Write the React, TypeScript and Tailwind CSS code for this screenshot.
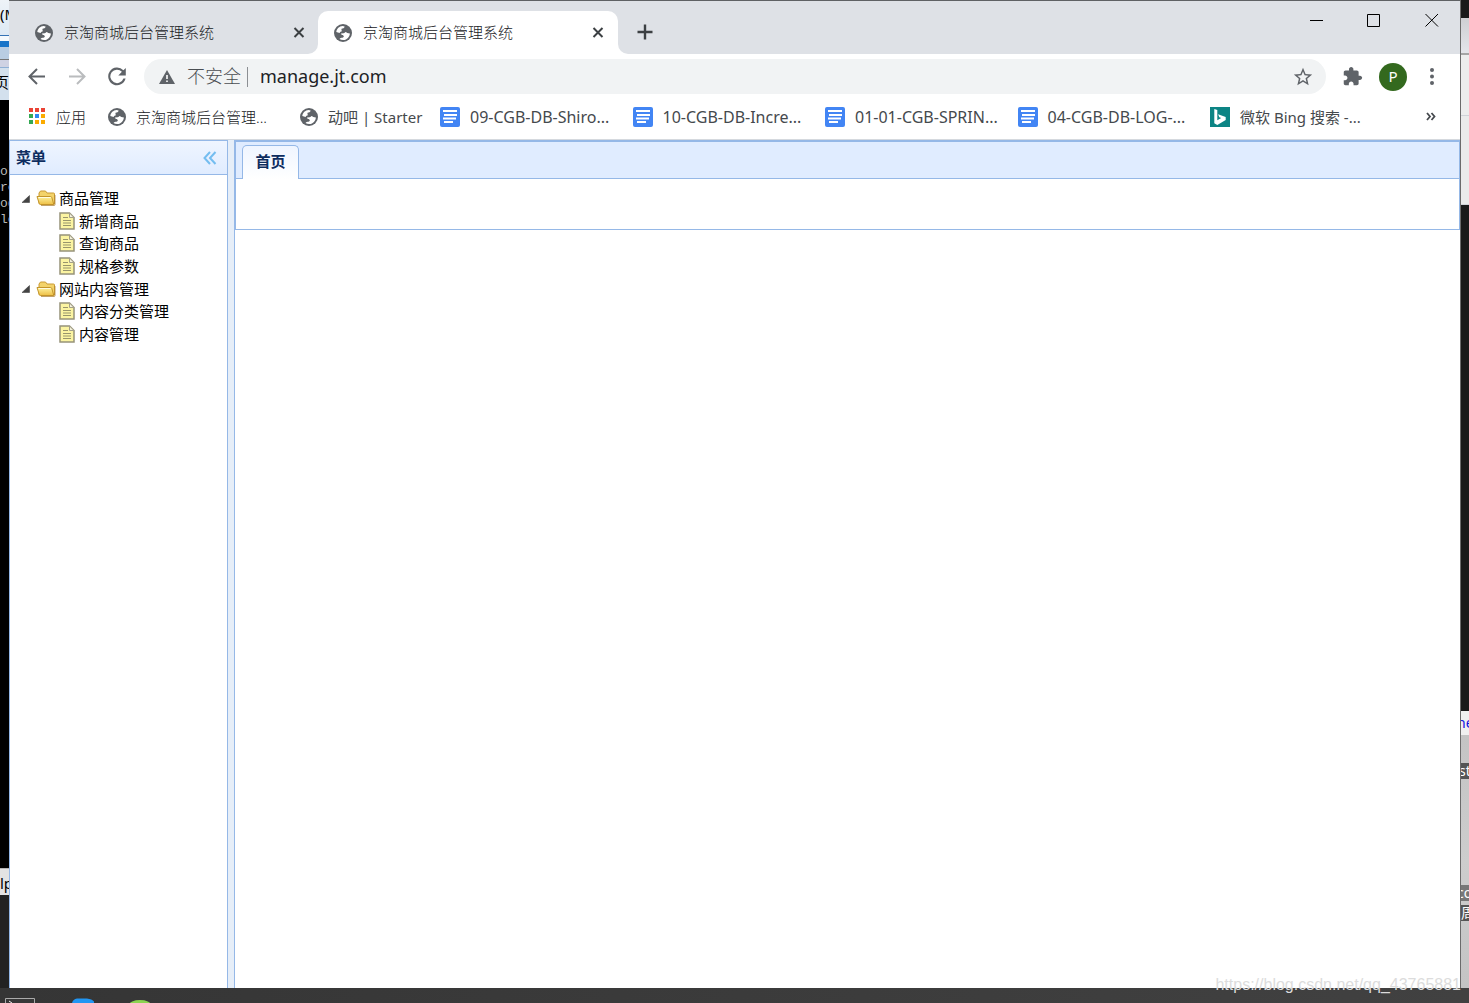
import React from "react";

const chromeFont = "font-['Noto_Sans','Noto_Sans_CJK_SC',sans-serif]";

function GlobeIcon() {
  return (
    <svg className="size-[18px] shrink-0" viewBox="0 0 18 18" aria-hidden="true">
      <circle cx="9" cy="9" r="9" fill="#5f6368" />
      <path d="M2.300 8C2.700 4.800 5.200 2.400 8.600 2.100l2 .3c-.2 1.600-1.200 2-2.500 2.100-.9.200-.7 1.300-.4 2 .2.900-.6 1.300-1.400 1.200L5.600 8.900z" fill="#fff" />
      <path d="M7 9.600l2.600-.4c1 0 1.300-1 2.200-1.200l1.500.9 2.600.5c-.3 3.500-2.900 6.300-6.300 6.600-1.600.1-2.900-.3-4.100-1.100.9-.9 1.800-1 2.900-1.100 1-.2 1.600-.8 1.400-1.700-.3-.9-1.100-1-1.900-1.200-.6-.2-.8-.7-.9-1.300z" fill="#fff" />
    </svg>
  );
}

function DocsIcon() {
  return (
    <svg className="size-5 shrink-0" viewBox="0 0 20 20" aria-hidden="true">
      <rect width="20" height="20" rx="2" fill="#4285f4" />
      <path d="M3 3h14v2H3zM4 7h13v2H4zM3 10.500h13v2H3zM4 14h9v2H4z" fill="#fff" />
    </svg>
  );
}

function BingIcon() {
  return (
    <svg className="size-5 shrink-0" viewBox="0 0 20 20" aria-hidden="true">
      <rect width="20" height="20" fill="#0c8484" />
      <path d="M4.300 2l3 1.100v10.200l3.900-2.200-1.900-.9-1.200-3 7.600 2.700v3.200L7.300 18l-3-1.700z" fill="#fff" />
    </svg>
  );
}

function AppsIcon() {
  const colors = ["#ea4335", "#ea4335", "#ea4335", "#34a853", "#2e88f0", "#fbab00", "#34a853", "#fbab00", "#fbab00"];
  return (
    <svg className="size-[18px] shrink-0" viewBox="0 0 18 18" aria-hidden="true">
      {colors.map((c, i) => (
        <rect key={i} x={1 + (i % 3) * 6} y={Math.floor(i / 3) * 6} width="4" height="4" fill={c} />
      ))}
    </svg>
  );
}

function CloseIcon() {
  return (
    <svg className="size-3" viewBox="0 0 12 12" aria-hidden="true">
      <path d="M1.500 1l9 9M10.500 1l-9 9" stroke="#3c4043" strokeWidth="2" />
    </svg>
  );
}

function FolderIcon() {
  return (
    <svg className="h-[18px] w-5 shrink-0" viewBox="0 0 20 18" aria-hidden="true">
      <defs>
        <linearGradient id="folderFront" x1="0" y1="0" x2="0" y2="1">
          <stop offset="0" stopColor="#fdf3a0" />
          <stop offset="1" stopColor="#eebf45" />
        </linearGradient>
      </defs>
      <path d="M3 14.500V4l1.500-2h5L11 4h6.500q1 0 1 1v10z" fill="#f3d36a" stroke="#c99a35" strokeLinejoin="round" />
      <path d="M1 7.500h13.500q1 0 1.300 1l2 7H4.300q-.8 0-1-.8z" fill="url(#folderFront)" stroke="#c4952a" strokeLinejoin="round" />
      <path d="M2.500 8.500h12" stroke="#fffce0" />
      <path d="M5 16.500h13q1 0 1-1V6" fill="none" stroke="#a87a2c" strokeOpacity=".7" />
    </svg>
  );
}

function FileIcon() {
  return (
    <svg className="h-[18px] w-4 shrink-0" viewBox="0 0 16 18" aria-hidden="true">
      <path d="M1 1h9.500L15 5.500V17H1z" fill="#fbf4a2" stroke="#97937a" strokeWidth="1.500" />
      <path d="M10.500 1v4.500H15z" fill="#f4f2dd" stroke="#a3a08a" />
      <path d="M4 5.500h5M4 8.500h8M4 11h8M4 13.500h8" stroke="#98956c" strokeWidth="1.200" />
    </svg>
  );
}

function BrowserTab({ active = false }: { active?: boolean }) {
  return (
    <div className={active ? "relative flex h-[43px] w-[300px] items-center rounded-t-[10px] bg-white pr-3 pl-4" : "relative flex h-[43px] w-[300px] items-center pr-[11px] pl-[17px]"}>
      {active && (
        <>
          <span className="absolute bottom-0 -left-2.5 size-2.5 bg-white"><span className="block size-full rounded-br-[10px] bg-[#dee1e6]" /></span>
          <span className="absolute -right-2.5 bottom-0 size-2.5 bg-white"><span className="block size-full rounded-bl-[10px] bg-[#dee1e6]" /></span>
        </>
      )}
      <GlobeIcon />
      <span className="ml-[11px] flex-1 text-left text-[15px] font-light whitespace-nowrap text-[#202124]">京淘商城后台管理系统</span>
      <button aria-label="关闭标签页" className="flex size-4 items-center justify-center"><CloseIcon /></button>
    </div>
  );
}

function TabStrip() {
  return (
    <div className="flex h-[54px] items-end border-t border-[#5f6164] bg-[#dee1e6] pl-[9px]">
      <BrowserTab />
      <BrowserTab active />
      <button aria-label="新标签页" className="mb-3.5 ml-[19px]">
        <svg className="size-4" viewBox="0 0 16 16"><path d="M8 .5v15M.5 8h15" stroke="#3c4043" strokeWidth="2.400" /></svg>
      </button>
      <div className="ml-auto flex gap-11 self-start pt-3 pr-[21px]">
        <button aria-label="最小化"><svg className="size-[14px]" viewBox="0 0 14 14"><path d="M1 7.500h13" stroke="#000" /></svg></button>
        <button aria-label="最大化"><svg className="size-[14px]" viewBox="0 0 14 14"><path d="M.5 1.500h12v12H.5z" fill="none" stroke="#000" /></svg></button>
        <button aria-label="关闭"><svg className="size-[14px]" viewBox="0 0 14 14"><path d="M.5 1l12.500 12.500M13 1L.5 13.500" stroke="#000" /></svg></button>
      </div>
    </div>
  );
}

function Toolbar() {
  return (
    <div className="flex h-[45px] items-center pr-[19px] pl-4">
      <button aria-label="后退" className="mr-4"><svg className="size-6" viewBox="0 0 24 24"><path d="M20 11.500H5M12 4L4.500 11.500 12 19" fill="none" stroke="#5f6368" strokeWidth="2" /></svg></button>
      <button aria-label="前进" className="mr-4"><svg className="size-6" viewBox="0 0 24 24"><path d="M4 11.500h15M12 4l7.500 7.500L12 19" fill="none" stroke="#babcbe" strokeWidth="2" /></svg></button>
      <button aria-label="重新加载" className="mr-[15px]"><svg className="size-6" viewBox="0 0 24 24"><path d="M18.400 5.300A8.800 8.800 0 1 0 20.600 13.500h-2.200a6.700 6.700 0 1 1-1.500-6.700L13.300 10.500h7.500V2.900z" fill="#5f6368" /></svg></button>
      <div className="flex h-[35px] flex-1 items-center rounded-full bg-[#f1f3f4] pr-3 pl-[15px]">
        <svg className="size-4 shrink-0" viewBox="0 0 16 16"><path d="M8 1l8 14H0z" fill="#5f6368" /><path d="M7.200 6h1.600v4H7.200zM7.200 11.500h1.600v1.600H7.200z" fill="#fff" /></svg>
        <span className="ml-3 text-[18px] font-light whitespace-nowrap text-[#4a4e52]">不安全</span>
        <span className="mr-3 ml-1.5 h-5 w-px bg-[#8c8f93]" />
        <input aria-label="地址栏" defaultValue="manage.jt.com" className="min-w-0 flex-1 bg-transparent text-[18px] text-[#202124] outline-none" />
        <button aria-label="为此标签页添加书签"><svg className="size-[22px]" viewBox="0 0 24 24"><path d="M22 9.240l-7.190-.62L12 2 9.190 8.630 2 9.240l5.460 4.730L5.820 21 12 17.270 18.180 21l-1.630-7.030L22 9.240zM12 15.400l-3.760 2.270 1-4.280-3.320-2.880 4.380-.38L12 6.100l1.710 4.040 4.380.38-3.320 2.880 1 4.280L12 15.400z" fill="#5f6368" /></svg></button>
      </div>
      <button aria-label="扩展程序" className="ml-4"><svg className="size-[21px]" viewBox="0 0 24 24"><path d="M20.500 11H19V7c0-1.100-.9-2-2-2h-4V3.500C13 2.120 11.880 1 10.500 1S8 2.120 8 3.500V5H4c-1.100 0-1.990.9-1.990 2v3.800H3.500c1.490 0 2.700 1.210 2.700 2.700s-1.210 2.700-2.700 2.700H2V20c0 1.100.9 2 2 2h3.800v-1.500c0-1.490 1.210-2.700 2.700-2.700 1.490 0 2.700 1.210 2.700 2.700V22H17c1.100 0 2-.9 2-2v-4h1.500c1.380 0 2.500-1.120 2.500-2.500S21.880 11 20.500 11z" fill="#5f6368" /></svg></button>
      <button aria-label="个人资料" className="ml-4 flex size-7 items-center justify-center rounded-full bg-[#33691e] text-[15px] text-white">P</button>
      <button aria-label="菜单" className="ml-4"><svg className="h-5 w-[18px]" viewBox="0 0 18 20"><circle cx="9" cy="3" r="2" fill="#5f6368" /><circle cx="9" cy="9.500" r="2" fill="#5f6368" /><circle cx="9" cy="16" r="2" fill="#5f6368" /></svg></button>
    </div>
  );
}

const bookmarkStyles = {
  han: "flex items-center gap-2.5 text-[15px] font-light whitespace-nowrap text-[#202124]",
  mixed: "flex items-center gap-2.5 text-[15px] whitespace-nowrap text-[#45494d]",
  latin: "flex items-center gap-2.5 text-[16px] whitespace-nowrap text-[#45494d]",
};

function Bookmark({ icon, label, kind }: { icon: React.ReactNode; label: string; kind: keyof typeof bookmarkStyles }) {
  return (
    <a href="#" className={bookmarkStyles[kind]}>
      {icon}
      {label}
    </a>
  );
}

function BookmarksBar() {
  return (
    <nav aria-label="书签" className="flex h-[41px] items-center border-b border-[#d5d9de] pr-6 pb-1 pl-[19px]">
      <div className="w-20 shrink-0"><Bookmark kind="han" icon={<AppsIcon />} label="应用" /></div>
      <div className="w-48 shrink-0"><Bookmark kind="han" icon={<GlobeIcon />} label="京淘商城后台管理..." /></div>
      <div className="w-[140px] shrink-0"><Bookmark kind="mixed" icon={<GlobeIcon />} label="动吧 | Starter" /></div>
      <div className="grid w-[770px] shrink-0 grid-cols-4">
        <Bookmark kind="latin" icon={<DocsIcon />} label="09-CGB-DB-Shiro..." />
        <Bookmark kind="latin" icon={<DocsIcon />} label="10-CGB-DB-Incre..." />
        <Bookmark kind="latin" icon={<DocsIcon />} label="01-01-CGB-SPRIN..." />
        <Bookmark kind="latin" icon={<DocsIcon />} label="04-CGB-DB-LOG-..." />
      </div>
      <Bookmark kind="mixed" icon={<BingIcon />} label="微软 Bing 搜索 -..." />
      <button aria-label="更多书签" className="ml-auto">
        <svg className="size-2.5" viewBox="0 0 10 10"><path d="M1 1l3 3.500L1 8M5.500 1l3 3.500-3 3.500" fill="none" stroke="#45494d" strokeWidth="1.800" /></svg>
      </button>
    </nav>
  );
}

const tree = [
  { label: "商品管理", folder: true },
  { label: "新增商品", folder: false },
  { label: "查询商品", folder: false },
  { label: "规格参数", folder: false },
  { label: "网站内容管理", folder: true },
  { label: "内容分类管理", folder: false },
  { label: "内容管理", folder: false },
];

function Sidebar() {
  return (
    <aside className="w-[219px] shrink-0 border border-b-0 border-[#95b8e7] bg-white">
      <div className="flex h-[34px] items-center justify-between border-b border-[#95b8e7] bg-linear-to-b from-[#eff5ff] to-[#e0ecff] pr-2.5 pl-1.5">
        <h2 className="text-[15px] font-bold text-[#0e2d5f]">菜单</h2>
        <button aria-label="折叠菜单">
          <svg className="size-[14px]" viewBox="0 0 14 14"><path d="M7 1L1.500 7 7 13M12.500 1L7 7l5.500 6" fill="none" stroke="#74bdf0" strokeWidth="2" /></svg>
        </button>
      </div>
      <ul role="tree" className="mt-3 grid min-h-[158px] auto-rows-fr text-[15px] leading-5 text-black">
        {tree.map((n) => (
          <li key={n.label} role="treeitem" className={n.folder ? "flex items-center pl-[11px]" : "flex items-center gap-1 pl-[49px]"}>
            {n.folder ? (
              <>
                <svg className="mr-1.5 size-[9px]" viewBox="0 0 9 9"><path d="M8.500 1.500v7H1z" fill="#444" stroke="#333" strokeWidth=".5" /></svg>
                <FolderIcon />
                <span className="ml-[3px]">{n.label}</span>
              </>
            ) : (
              <>
                <FileIcon />
                <span>{n.label}</span>
              </>
            )}
          </li>
        ))}
      </ul>
    </aside>
  );
}

function Workspace() {
  return (
    <main className="min-w-0 flex-1 border-t border-l border-[#95b8e7] bg-white">
      <div className="h-[89px] border border-[#95b8e7]">
        <div className="flex h-[37px] items-end border-b border-[#95b8e7] bg-[#e0ecff] pl-1.5" role="tablist">
          <button role="tab" aria-selected="true" className="-mb-px h-[34px] w-[57px] rounded-t-[5px] border border-b-0 border-[#95b8e7] bg-linear-to-b from-[#eff5ff] to-white pb-0.5 text-[15px] font-bold text-[#0e2d5f]">首页</button>
        </div>
      </div>
    </main>
  );
}

function LeftDesktop() {
  return (
    <div className="flex w-[9px] shrink-0 flex-col overflow-hidden bg-black whitespace-nowrap" aria-hidden="true">
      <div className="h-[35px] bg-linear-to-b from-[#eef3f8] to-[#dde9f4] pt-1 font-['Noto_Sans',sans-serif] text-[15px] leading-5 text-black">(M</div>
      <div className="h-1.5 border-t border-[#3673b5] bg-[#f5f9fc]" />
      <div className="h-1.5 bg-[#1874c8]" />
      <div className="h-3 bg-[#b9cde2]" />
      <div className="h-2 border-t border-[#767676] bg-[#cfd2e3]" />
      <div className="h-[33px] border-t border-[#8fb0d5] bg-[#d3e0ed]"><span className="-ml-1.5 block pt-1 font-['Noto_Sans_CJK_SC',sans-serif] text-[15px] leading-5">页</span></div>
      <div className="h-[768px] pt-16 font-['Liberation_Mono',monospace] text-[13px] leading-4 text-[#b8b8b8]">
        <div>o:</div><div>re</div><div>og</div><div>lo</div>
      </div>
      <div className="h-[27px] border-t border-[#b5b5b5] bg-[#e3e3e3] pt-1 font-['Noto_Sans',sans-serif] text-[15px] leading-5">lp</div>
      <div className="flex-1 bg-[#222]" />
    </div>
  );
}

function RightDesktop() {
  return (
    <div className="flex w-[9px] shrink-0 flex-col overflow-hidden border-l border-[#6b6b6b] bg-[#1a1a1a] font-['Noto_Sans','Noto_Sans_CJK_SC',sans-serif] text-[14px] leading-4 whitespace-nowrap" aria-hidden="true">
      <div className="h-[18px]" />
      <div className="h-[35px] bg-linear-to-b from-[#cfcfd3] to-[#e4e5ea]" />
      <div className="h-[62px] border-t-2 border-[#a5a5a5] bg-[#ededed]" />
      <div className="h-[90px] border-t border-b border-[#d0d3d8] bg-[#ebebeb]" />
      <div className="h-[506px] bg-[#1a1a1a]" />
      <div className="h-6 bg-[#f0f0f0] pt-1 text-[#1010e0]"><span className="-ml-1">ne</span></div>
      <div className="flex-1 bg-linear-to-b from-[#c4c4c4] via-[#cdcdcd] to-[#c4c4c4] pt-7">
        <div className="bg-[#555] text-white"><span className="-ml-0.5">st</span></div>
        <div className="mt-[106px] bg-[#777] text-white"><span className="-ml-1">co</span></div>
        <div className="mt-1 bg-[#555] text-white">周</div>
      </div>
    </div>
  );
}

export default function App() {
  return (
    <div className={`relative flex h-screen flex-col overflow-hidden ${chromeFont}`}>
      <div className="flex min-h-0 flex-1">
        <LeftDesktop />
        <div className="flex min-w-0 flex-1 flex-col bg-white">
          <TabStrip />
          <Toolbar />
          <BookmarksBar />
          <div className="flex min-h-0 flex-1 bg-[#e6eef8]">
            <Sidebar />
            <div className="w-1.5 shrink-0" />
            <Workspace />
          </div>
        </div>
        <RightDesktop />
      </div>
      <footer className="flex h-[15px] shrink-0 items-end overflow-hidden bg-linear-to-r from-[#353535] to-[#414141]">
        <svg className="h-[6px] w-40" viewBox="0 0 160 6" aria-hidden="true">
          <path d="M5.500 7V1.500h29V7" fill="#383838" stroke="#aaa" />
          <path d="M9 4l3 2" stroke="#eee" />
          <path d="M72 6q1-4 5-4.500h10q5 .5 7 3v2z" fill="#2196f3" />
          <ellipse cx="140" cy="8" rx="11" ry="5" fill="#8bd450" />
        </svg>
      </footer>
      <span className="pointer-events-none absolute right-2 bottom-2 font-['Liberation_Sans',sans-serif] text-[16px] leading-5 text-[#dcdcdc]">https://blog.csdn.net/qq_43765881</span>
    </div>
  );
}
